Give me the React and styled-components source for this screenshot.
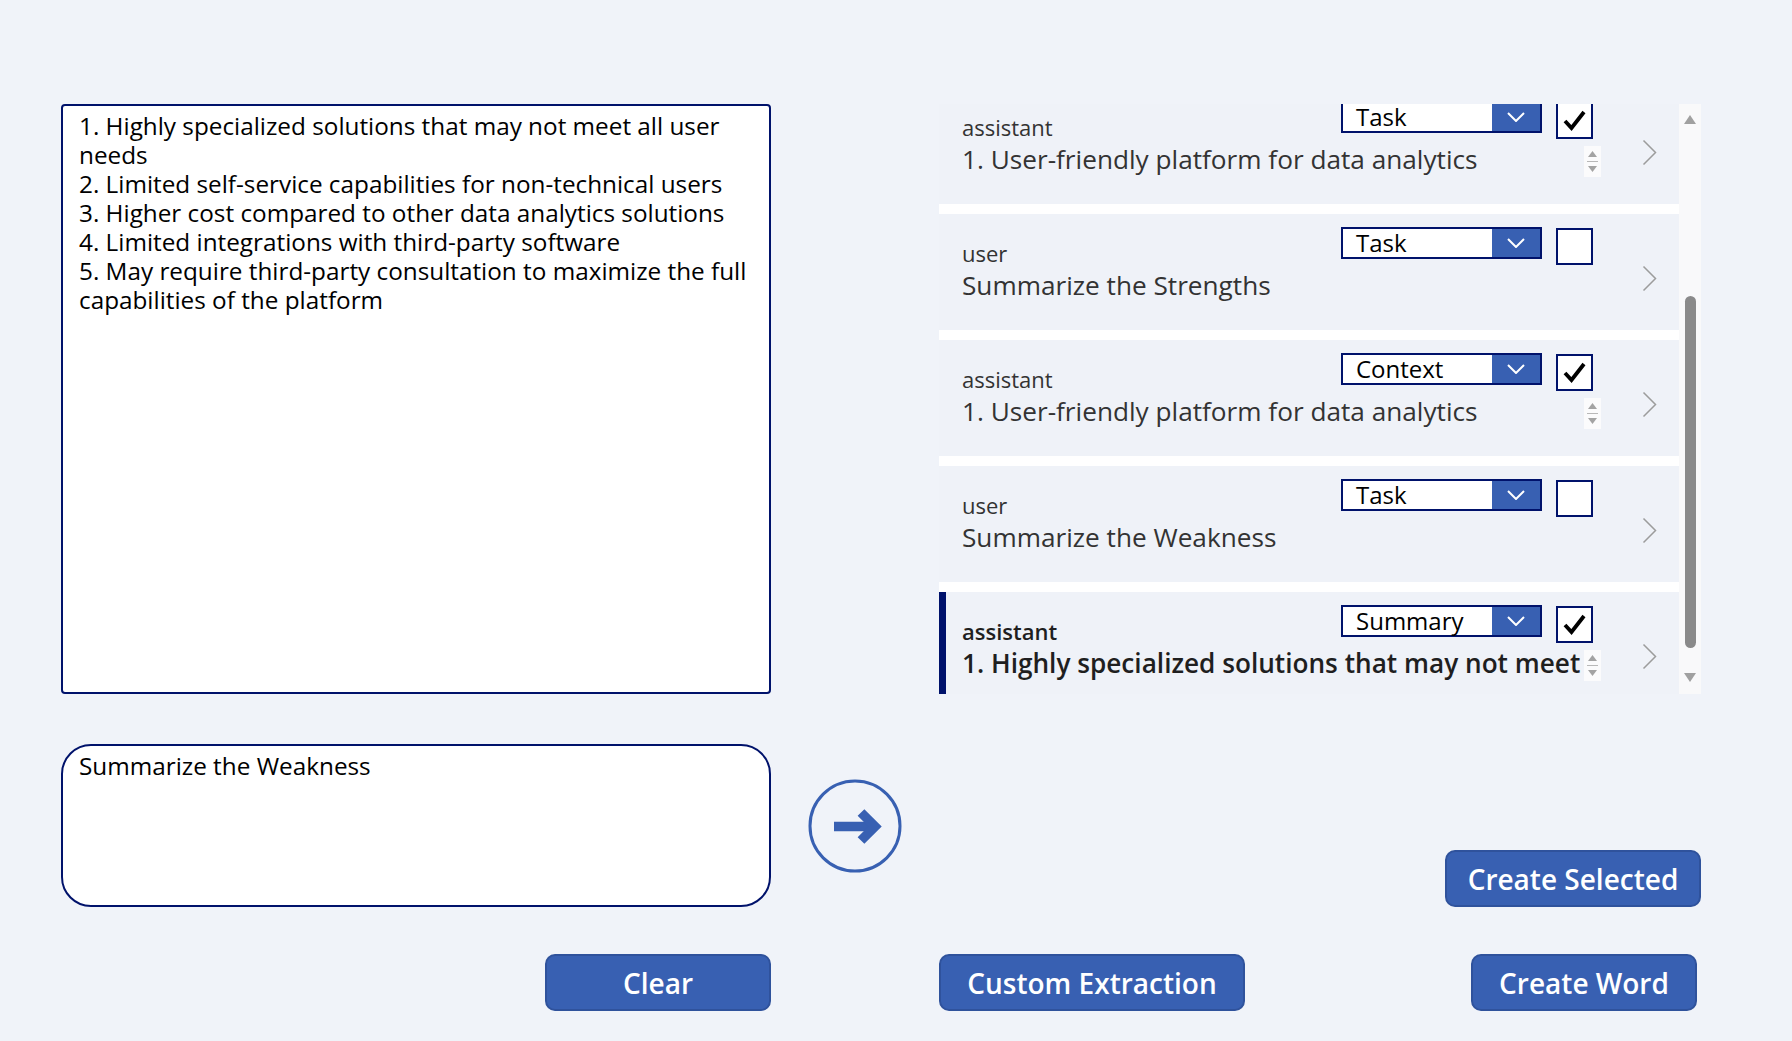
import React from 'react';
import styled, { createGlobalStyle } from 'styled-components';

const GlobalStyle = createGlobalStyle`
  html, body { margin: 0; padding: 0; background: #f0f3f9; }
  body { font-family: "Open Sans", "Noto Sans", sans-serif; }
  * { box-sizing: border-box; }
`;

const NAVY = '#00126b';
const BLUE = '#3860b2';

const Page = styled.div`
  width: 1792px;
  height: 1041px;
  overflow: hidden;
  padding: 104px 0 0 61px;
  display: flex;
  flex-direction: column;
  background: #f0f3f9;
`;

const Row = styled.div`
  display: grid;
  grid-template-columns: 710px 168px 762px;
  height: ${p => p.$h}px;
  margin-top: ${p => p.$mt || 0}px;
`;

const OutputBox = styled.div`
  grid-column: 1;
  border: 2px solid ${NAVY};
  border-radius: 4px;
  background: #fff;
  padding: 5px 16px;
  font-size: 24.3px;
  line-height: 29px;
  color: #000;
  white-space: pre-wrap;
  overflow: hidden;
`;

const ListFrame = styled.div`
  grid-column: 3;
  display: flex;
  background: #fff;
  overflow: hidden;
`;

const Viewport = styled.div`
  flex: 1;
  overflow: hidden;
`;

const Items = styled.div`
  display: flex;
  flex-direction: column;
  gap: 10px;
  margin-top: -16px;
`;

const Item = styled.div`
  height: 116px;
  flex: none;
  display: flex;
  background: #eff2f8;
  border-left: 7px solid ${p => (p.$selected ? NAVY : 'transparent')};
  padding-left: 16px;
`;

const Content = styled.div`
  flex: 1;
  min-width: 0;
  padding-top: 13px;
  display: flex;
  flex-direction: column;
`;

const TopRow = styled.div`
  display: flex;
  align-items: flex-start;
  padding-right: 8px;
`;

const Label = styled.div`
  flex: 1;
  margin-top: 11px;
  font-size: 22px;
  line-height: 30px;
  color: ${p => (p.$selected ? '#1f1f1f' : '#333')};
  font-weight: ${p => (p.$selected ? 600 : 400)};
`;

const Dropdown = styled.div`
  width: 201px;
  height: 32px;
  flex: none;
  display: flex;
  border: 2px solid ${NAVY};
  background: #fff;
`;

const DropValue = styled.div`
  flex: 1;
  padding-left: 13px;
  font-size: 24px;
  line-height: 28px;
  color: #000;
`;

const DropButton = styled.div`
  width: 48px;
  background: ${BLUE};
  display: flex;
  align-items: center;
  justify-content: center;
`;

const Check = styled.div`
  width: 37px;
  height: 37px;
  flex: none;
  margin-left: 14px;
  margin-top: 1px;
  border: 2px solid ${NAVY};
  background: #fff;
  display: flex;
  align-items: center;
  justify-content: center;
`;

const BodyRow = styled.div`
  display: flex;
  align-items: flex-start;
`;

const BodyText = styled.div`
  flex: 1;
  min-width: 0;
  height: 34px;
  overflow: hidden;
  font-size: 26.2px;
  line-height: 34px;
  color: ${p => (p.$selected ? '#1f1f1f' : '#333')};
  font-weight: ${p => (p.$selected ? 600 : 400)};
`;

const Spinner = styled.div`
  width: 17px;
  height: 31px;
  margin-top: 4px;
  flex: none;
  background: #fbfbfc;
  display: flex;
  align-items: center;
  justify-content: center;
`;

const ChevronCell = styled.div`
  width: 78px;
  flex: none;
  display: flex;
  align-items: center;
  padding-left: 41px;
  padding-top: 12px;
`;

const Track = styled.div`
  width: 22px;
  flex: none;
  background: #f9f9fa;
  display: flex;
  flex-direction: column;
  align-items: center;
`;

const Thumb = styled.div`
  width: 11px;
  height: 352px;
  border-radius: 6px;
  background: #8a8a8a;
  margin-top: 172px;
`;

const InputBox = styled.div`
  grid-column: 1;
  border: 2px solid ${NAVY};
  border-radius: 30px;
  background: #fff;
  padding: 5px 16px;
  font-size: 24.3px;
  line-height: 29px;
  color: #000;
`;

const SendCell = styled.div`
  grid-column: 2;
  display: flex;
  align-items: center;
  justify-content: center;
`;

const Button = styled.button`
  width: ${p => p.$w}px;
  height: 57px;
  border: 2px solid #2f529c;
  border-radius: 10px;
  background: ${BLUE};
  color: #fff;
  font-family: "Open Sans", "Noto Sans", sans-serif;
  font-size: 28px;
  font-weight: 600;
  padding: 0;
  cursor: pointer;
`;

const EndCell = styled.div`
  grid-column: ${p => p.$col};
  display: flex;
  justify-content: flex-end;
  align-items: flex-end;
`;

const SplitCell = styled.div`
  grid-column: 3;
  display: flex;
  justify-content: space-between;
  align-items: flex-start;
  padding-right: 4px;
`;

const weakness = `1. Highly specialized solutions that may not meet all user needs
2. Limited self-service capabilities for non-technical users
3. Higher cost compared to other data analytics solutions
4. Limited integrations with third-party software
5. May require third-party consultation to maximize the full capabilities of the platform`;

const items = [
  { role: 'assistant', text: '1. User-friendly platform for data analytics', type: 'Task', checked: true, spin: true },
  { role: 'user', text: 'Summarize the Strengths', type: 'Task', checked: false },
  { role: 'assistant', text: '1. User-friendly platform for data analytics', type: 'Context', checked: true, spin: true },
  { role: 'user', text: 'Summarize the Weakness', type: 'Task', checked: false },
  { role: 'assistant', text: '1. Highly specialized solutions that may not meet all user needs', type: 'Summary', checked: true, spin: true, selected: true },
];

const DownChevron = () => (
  <svg width="18" height="10" viewBox="0 0 18 10">
    <polyline points="1,1 9,9 17,1" fill="none" stroke="#fff" strokeWidth="2" />
  </svg>
);

const CheckMark = () => (
  <svg width="25" height="23" viewBox="0 0 25 23">
    <polyline points="3,12 9.5,19 22,3" fill="none" stroke="#000" strokeWidth="3.8" strokeLinejoin="miter" />
  </svg>
);

const SpinIcon = () => (
  <svg width="13" height="27" viewBox="0 0 13 27">
    <polygon points="6.5,3 11,9 2,9" fill="#a3a3a3" />
    <line x1="1" y1="13.5" x2="12" y2="13.5" stroke="#b8b8b8" strokeWidth="1" />
    <polygon points="2,18 11,18 6.5,24" fill="#a3a3a3" />
  </svg>
);

const NextChevron = () => (
  <svg width="15" height="27" viewBox="0 0 15 27">
    <polyline points="1.5,1.5 13.5,13.5 1.5,25.5" fill="none" stroke="#9c9c9c" strokeWidth="1.5" />
  </svg>
);

const TriUp = () => (
  <svg width="12" height="9" viewBox="0 0 12 9" style={{ marginTop: 11 }}>
    <polygon points="6,0 12,9 0,9" fill="#a0a0a0" />
  </svg>
);

const TriDown = () => (
  <svg width="12" height="9" viewBox="0 0 12 9" style={{ marginTop: 25 }}>
    <polygon points="0,0 12,0 6,9" fill="#a0a0a0" />
  </svg>
);

const SendIcon = () => (
  <svg width="94" height="94" viewBox="0 0 94 94">
    <circle cx="47" cy="47" r="45" fill="none" stroke={BLUE} strokeWidth="3" />
    <line x1="26" y1="47.5" x2="62" y2="47.5" stroke={BLUE} strokeWidth="9.5" />
    <polyline points="53,33.5 67,47.5 53,61.5" fill="none" stroke={BLUE} strokeWidth="9.5" strokeLinejoin="miter" />
  </svg>
);

export default function App() {
  return (
    <>
      <GlobalStyle />
      <Page>
        <Row $h={590}>
          <OutputBox>{weakness}</OutputBox>
          <ListFrame>
            <Viewport>
              <Items>
                {items.map((it, i) => (
                  <Item key={i} $selected={it.selected}>
                    <Content>
                      <TopRow>
                        <Label $selected={it.selected}>{it.role}</Label>
                        <Dropdown>
                          <DropValue>{it.type}</DropValue>
                          <DropButton>
                            <DownChevron />
                          </DropButton>
                        </Dropdown>
                        <Check>{it.checked && <CheckMark />}</Check>
                      </TopRow>
                      <BodyRow>
                        <BodyText $selected={it.selected}>{it.text}</BodyText>
                        {it.spin && (
                          <Spinner>
                            <SpinIcon />
                          </Spinner>
                        )}
                      </BodyRow>
                    </Content>
                    <ChevronCell>
                      <NextChevron />
                    </ChevronCell>
                  </Item>
                ))}
              </Items>
            </Viewport>
            <Track>
              <TriUp />
              <Thumb />
              <TriDown />
            </Track>
          </ListFrame>
        </Row>
        <Row $h={163} $mt={50}>
          <InputBox>Summarize the Weakness</InputBox>
          <SendCell>
            <SendIcon />
          </SendCell>
          <EndCell $col={3}>
            <Button $w={256}>Create Selected</Button>
          </EndCell>
        </Row>
        <Row $h={57} $mt={47}>
          <EndCell $col={1}>
            <Button $w={226}>Clear</Button>
          </EndCell>
          <SplitCell>
            <Button $w={306}>Custom Extraction</Button>
            <Button $w={226}>Create Word</Button>
          </SplitCell>
        </Row>
      </Page>
    </>
  );
}
